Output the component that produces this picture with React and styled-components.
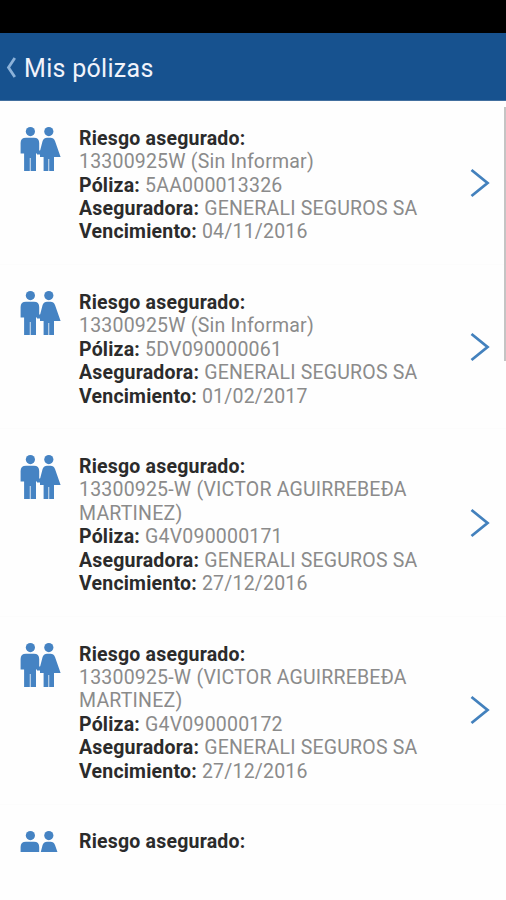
import styled, { createGlobalStyle } from 'styled-components'

const EstilosGlobales = createGlobalStyle`
  * {
    box-sizing: border-box;
  }

  body {
    margin: 0;
    background: #fefefe;
    font-family: Roboto, 'Liberation Sans', sans-serif;
  }
`

const Pantalla = styled.div`
  height: 900px;
  overflow: hidden;

  display: flex;
  flex-direction: column;
`

const BarraEstado = styled.div`
  height: 33px;
  flex-shrink: 0;

  background: #000;
`

const Cabecera = styled.header`
  height: 68px;
  flex-shrink: 0;
  padding: 3px 0 0 6px;

  display: flex;
  align-items: center;
  gap: 7px;

  background: #17528f;
  border-bottom: 1px solid #426f9f;
`

const Titulo = styled.h1`
  margin: 1px 0 0;

  color: #f1f3fb;
  font-size: 25px;
  font-weight: 400;
  letter-spacing: 0.3px;
`

const Lista = styled.ul`
  position: relative;
  height: 751px;
  margin: 0;
  padding: 0;
  overflow: hidden;

  list-style: none;
`

const BarraScroll = styled.span`
  position: absolute;
  top: 6px;
  right: 0;
  width: 2px;
  height: 254px;

  background: #c4c4c4;
`

const Elemento = styled.li`
  padding: 25.6px 16px 20.3px 20px;

  display: flex;
  align-items: flex-start;

  border-bottom: 1px solid #fcfcfc;
`

const Datos = styled.div`
  width: 350px;
  margin-left: 17px;
`

const Linea = styled.p`
  margin: 0;

  color: #8b8b8b;
  font-size: 19.5px;
  line-height: 23.45px;
  letter-spacing: 0.2px;
`

const Etiqueta = styled.strong`
  color: #2b2b2b;
  font-weight: 700;
`

const Familia = styled.svg`
  margin-top: -0.6px;
`

const Flecha = styled.svg`
  margin: 0 0 5px auto;
  align-self: center;
`

const IconoFamilia = () => (
  <Familia width="42" height="47" viewBox="0 0 42 47" fill="#4583c3">
    <circle cx="10.4" cy="5.6" r="4.6" />
    <circle cx="28.8" cy="5.6" r="4.6" />
    <path d="M6 11.8H14Q19.2 11.8 19.2 17V27.5H16V45H10.6V32H9.8V45H4.1V27.5H.6V17Q.6 11.8 6 11.8Z" />
    <path d="M27 11.8H30.6Q33.6 11.8 35 15L40.6 31H34V45H29.2V33H28.4V45H23.6V31H20V25L22.6 15Q24 11.8 27 11.8Z" />
    <path d="M17 24.5H22V28.5H17Z" />
  </Familia>
)

const polizas = [
  {
    riesgo: '13300925W (Sin Informar)',
    numero: '5AA000013326',
    vencimiento: '04/11/2016'
  },
  {
    riesgo: '13300925W (Sin Informar)',
    numero: '5DV090000061',
    vencimiento: '01/02/2017'
  },
  {
    riesgo: '13300925-W (VICTOR AGUIRREBEĐA MARTINEZ)',
    numero: 'G4V090000171',
    vencimiento: '27/12/2016'
  },
  {
    riesgo: '13300925-W (VICTOR AGUIRREBEĐA MARTINEZ)',
    numero: 'G4V090000172',
    vencimiento: '27/12/2016'
  }
]

const Poliza = ({ poliza }) => (
  <Elemento>
    <IconoFamilia />
    <Datos>
      <Linea>
        <Etiqueta>Riesgo asegurado:</Etiqueta>
      </Linea>
      {poliza && (
        <>
          <Linea>{poliza.riesgo}</Linea>
          <Linea>
            <Etiqueta>Póliza:</Etiqueta> {poliza.numero}
          </Linea>
          <Linea>
            <Etiqueta>Aseguradora:</Etiqueta> GENERALI SEGUROS SA
          </Linea>
          <Linea>
            <Etiqueta>Vencimiento:</Etiqueta> {poliza.vencimiento}
          </Linea>
        </>
      )}
    </Datos>
    {poliza && (
      <Flecha width="20" height="30" viewBox="0 0 20 30" fill="none">
        <path d="M1.5 2L17.5 15L1.5 28" stroke="#4381bd" strokeWidth="2.8" />
      </Flecha>
    )}
  </Elemento>
)

const App = () => (
  <>
    <EstilosGlobales />
    <Pantalla>
      <BarraEstado />
      <Cabecera>
        <svg width="11" height="24" viewBox="0 0 11 24" fill="none">
          <path d="M8.8 2L2.5 11.5L8.8 21" stroke="#8cb2d9" strokeWidth="2.8" />
        </svg>
        <Titulo>Mis pólizas</Titulo>
      </Cabecera>
      <Lista>
        {polizas.map(poliza => (
          <Poliza key={poliza.numero} poliza={poliza} />
        ))}
        <Poliza />
        <BarraScroll />
      </Lista>
    </Pantalla>
  </>
)

export default App
